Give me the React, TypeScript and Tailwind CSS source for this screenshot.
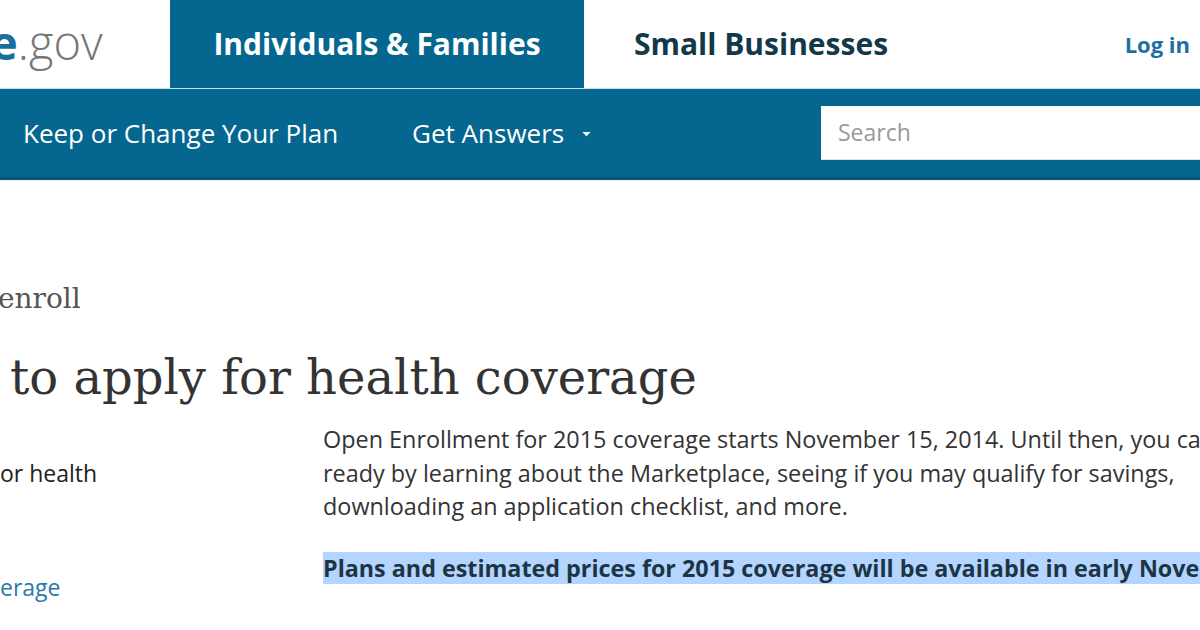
import React from "react";

const sans = { fontFamily: '"Open Sans", "Liberation Sans", sans-serif' };
const serif = { fontFamily: '"DejaVu Serif", "Liberation Serif", serif' };

export default function App() {
  return (
    <div className="w-[1200px] h-[630px] overflow-hidden bg-white" style={sans}>
      {/* Top header */}
      <div className="flex h-[88px] items-stretch">
        <div className="w-[170px] shrink-0 flex items-center">
          <span className="text-[47px] leading-none -ml-[10px] -mt-[4px]">
            <span className="font-bold text-[#1a6fa0]">e</span>
            <span className="font-light text-[#777]">.gov</span>
          </span>
        </div>
        <div className="w-[414px] shrink-0 bg-[#05678f] flex items-center justify-center">
          <span className="text-white font-bold text-[30px] -mt-[2px]">Individuals &amp; Families</span>
        </div>
        <div className="flex-1 flex items-center pl-[50px]">
          <span className="text-[#12384a] font-bold text-[30px] -mt-[2px]">Small Businesses</span>
        </div>
        <div className="flex items-center pr-[10px]">
          <span className="text-[#1d6fa3] font-bold text-[22px]">Log in</span>
        </div>
      </div>
      <div className="h-[1px] bg-[#c3e4ef]" />
      {/* Nav bar */}
      <div className="h-[88px] bg-[#05678f] flex items-center">
        <span className="ml-[23px] text-white text-[26px]">Keep or Change Your Plan</span>
        <span className="ml-[74px] text-white text-[26px] flex items-center">
          Get Answers
          <svg width="9" height="5" viewBox="0 0 10 6" className="ml-[18px] mt-[2px]">
            <path d="M0 0 L10 0 L5 5 Z" fill="#ffffff" />
          </svg>
        </span>
        <div className="ml-auto w-[379px] h-[54px] bg-white flex items-center pl-[17px] border-b border-[#cfe8f1]">
          <span className="text-[#999] text-[23px]">Search</span>
        </div>
      </div>
      <div className="h-[3px] bg-[#0b5878]" />
      <div className="h-[1px] bg-[#dcf3f8]" />

      {/* Content */}
      <div className="pt-[100px]">
        <div className="text-[28px] leading-[36px] text-[#555] -ml-[2px]" style={serif}>enroll</div>
        <h1 className="mt-[30px] ml-[10px] text-[48px] leading-[60px] text-[#333]" style={serif}>to apply for health coverage</h1>
        <div className="flex mt-[16px]">
          <div className="w-[323px] shrink-0 text-[23px] text-[#222]">
            <div className="mt-[33px]">or health</div>
            <div className="mt-[79px] text-[#2a79ad]">erage</div>
          </div>
          <div className="flex-1 min-w-0 text-[23.4px] leading-[33.5px] text-[#333] whitespace-nowrap">
            <p>Open Enrollment for 2015 coverage starts November 15, 2014. Until then, you can get</p>
            <p>ready by learning about the Marketplace, seeing if you may qualify for savings,</p>
            <p>downloading an application checklist, and more.</p>
            <p className="mt-[28px] font-bold text-[23.3px] text-[#1c3446]">
              <span className="bg-[#b4d5fd]">Plans and estimated prices for 2015 coverage will be available in early November.</span>
            </p>
          </div>
        </div>
      </div>
    </div>
  );
}
